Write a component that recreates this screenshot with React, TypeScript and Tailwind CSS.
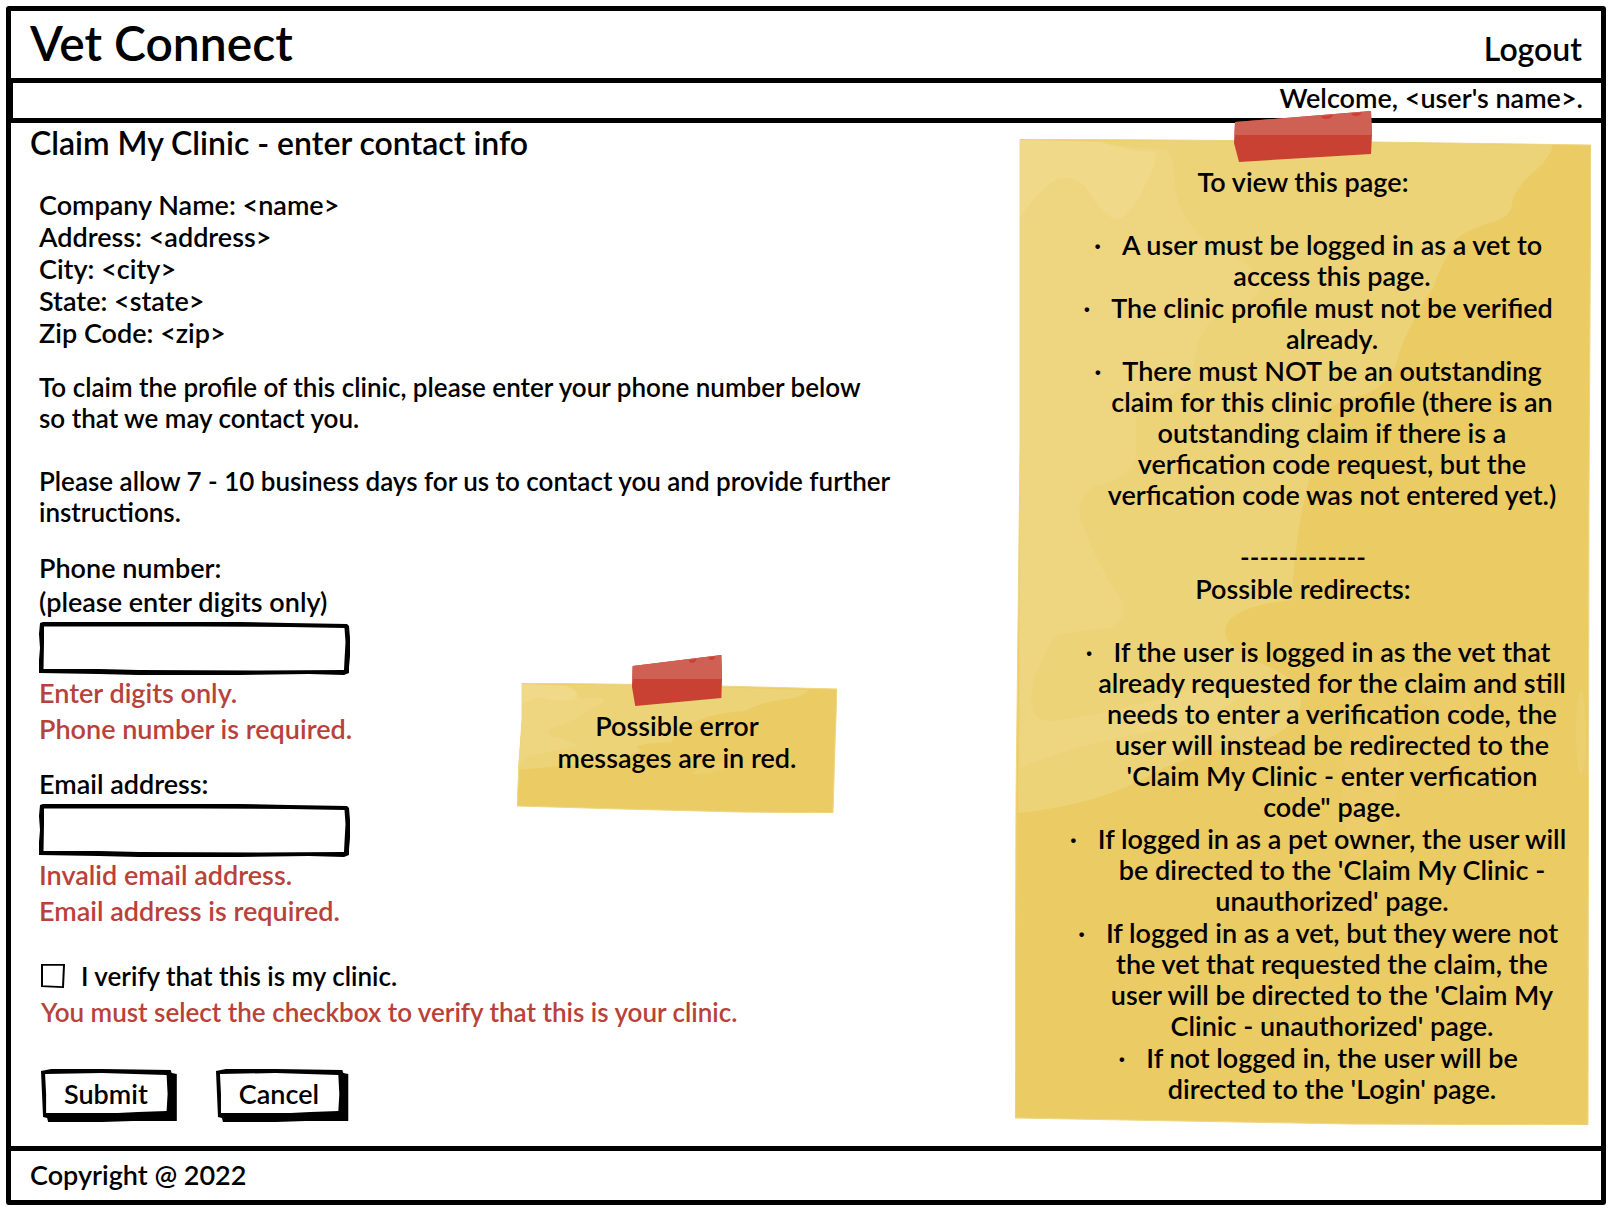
import type { ReactNode } from "react";

const companyDetails = [
  "Company Name: <name>",
  "Address: <address>",
  "City: <city>",
  "State: <state>",
  "Zip Code: <zip>",
];

const viewRules = [
  ["A user must be logged in as a vet to", "access this page."],
  ["The clinic profile must not be verified", "already."],
  [
    "There must NOT be an outstanding",
    "claim for this clinic profile (there is an",
    "outstanding claim if there is a",
    "verfication code request, but the",
    "verfication code was not entered yet.)",
  ],
];

const redirectRules = [
  [
    "If the user is logged in as the vet that",
    "already requested for the claim and still",
    "needs to enter a verification code, the",
    "user will instead be redirected to the",
    "'Claim My Clinic - enter verfication",
    'code" page.',
  ],
  [
    "If logged in as a pet owner, the user will",
    "be directed to the 'Claim My Clinic -",
    "unauthorized' page.",
  ],
  [
    "If logged in as a vet, but they were not",
    "the vet that requested the claim, the",
    "user will be directed to the 'Claim My",
    "Clinic - unauthorized' page.",
  ],
  ["If not logged in, the user will be", "directed to the 'Login' page."],
];

function Tape({ className }: { className: string }) {
  return (
    <svg
      className={`absolute inset-x-0 -top-7 mx-auto h-[51px] ${className}`}
      viewBox="0 0 138 51"
      preserveAspectRatio="none"
      aria-hidden="true"
    >
      <path d="M1 11 L137 0 L138 24 L137 43 L5 51 L0 32 Z" fill="#c94133" />
      <path d="M1 11 L137 0 L138 24 H0.5 Z" fill="#cf6054" />
      <path d="M87 5 L99 4 Q97 8 92 8 Q88 8 87 5 Z" fill="#c94133" />
      <path d="M117 2.500 L128 1.500 Q126 5 122 5 Q118 5 117 2.500 Z" fill="#c94133" />
    </svg>
  );
}

function TallPaper() {
  return (
    <svg
      className="absolute inset-0 size-full"
      viewBox="1015 139 576 986"
      preserveAspectRatio="none"
      aria-hidden="true"
    >
      <path
        d="M1020 139 L1300 141 L1591 145 L1589 500 L1588 1125 L1350 1124 L1180 1121 L1015 1118 L1016 800 L1020 450 Z"
        fill="#ebcb63"
        stroke="#efd684"
        strokeWidth="1"
      />
      <path
        d="M1020 140 L1300 142 L1553 145 Q1550 158 1538 168 Q1512 190 1512 205 Q1510 218 1490 223 Q1460 232 1455 242 Q1436 275 1434 287 Q1412 318 1399 353 Q1394 385 1360 396 Q1330 402 1320 420 Q1308 450 1309 480 Q1294 540 1292 600 Q1225 607 1225 632 Q1227 650 1265 665 Q1301 680 1301 700 Q1300 730 1254 743 Q1200 750 1156 772 Q1100 805 1018 813 L1020 450 Z"
        fill="#ecd377"
      />
      <path
        d="M1020 140 L1100 142 Q1130 149 1166 149 Q1174 155 1175 187 Q1180 220 1210 244 Q1256 262 1259 285 Q1262 300 1225 313 Q1196 325 1194 367 Q1190 395 1150 400 L1136 410 L1136 455 Q1132 480 1095 486 Q1076 498 1080 518 Q1100 570 1122 600 Q1128 622 1108 628 L1060 634 Q1048 640 1033 683 Q1026 722 1050 721 Q1120 712 1180 692 Q1215 680 1255 683 Q1215 725 1150 732 Q1075 745 1020 768 L1020 450 Z"
        fill="#eed580"
      />
      <path
        d="M1020 140 L1100 142 Q1130 152 1155 152 Q1156 170 1145 185 Q1130 219 1115 219 Q1102 215 1085 186 Q1062 168 1045 188 Q1030 202 1020 217 Z"
        fill="#f0da8a"
      />
      <path
        d="M1381 682 Q1430 668 1462 690 Q1482 712 1458 728 Q1445 730 1434 715 Q1412 690 1381 682 Z"
        fill="#eccd69"
      />
      <path d="M1350 726 Q1376 718 1395 740 Q1408 790 1380 835 Q1362 866 1350 858 Q1334 790 1350 726 Z" fill="#eccd69" />
      <ellipse cx="1581" cy="733" rx="5" ry="42" fill="#eccf6e" />
    </svg>
  );
}

function SmallPaper() {
  return (
    <svg
      className="absolute inset-0 size-full"
      viewBox="517 683 320 130"
      preserveAspectRatio="none"
      aria-hidden="true"
    >
      <path
        d="M522 683 L680 685 L837 689 L835 745 L833 813 L740 812 L620 809 L517 806 L519 765 L522 720 Z"
        fill="#ebcb63"
        stroke="#efd684"
        strokeWidth="1"
      />
      <path
        d="M522 684 L680 686 L808 690 Q806 697 780 700 Q762 702 745 711 Q715 713 700 720 Q672 728 672 742 Q625 744 641 750 Q620 762 560 766 L518 770 L522 720 Z"
        fill="#ecd377"
      />
      <path
        d="M522 684 L566 686 Q580 692 578 698 L603 698 Q606 704 594 707 Q575 722 553 728 Q540 735 560 738 L580 746 Q545 752 530 756 L519 764 L522 720 Z"
        fill="#eed580"
      />
      <path d="M522 684 L566 686 Q582 692 574 700 Q552 702 540 697 L522 704 Z" fill="#f0da8a" />
      <path d="M692 774 Q700 764 740 760 Q715 776 692 774 Z" fill="#eccf6e" />
    </svg>
  );
}

function RuleList({ rules }: { rules: string[][] }) {
  return (
    <ul className="space-y-px pl-[58px]">
      {rules.map((lines) => (
        <li key={lines[0]}>
          {lines.map((line, i) => (
            <span key={line} className="block whitespace-nowrap">
              {i === 0 && (
                <span aria-hidden="true" className="-ml-7 inline-block w-7 text-left">
                  ·
                </span>
              )}
              {line}
            </span>
          ))}
        </li>
      ))}
    </ul>
  );
}

function TextField({ id, label, type }: { id: string; label: ReactNode; type: string }) {
  return (
    <>
      <label htmlFor={id} className="block leading-[34px]">
        {label}
      </label>
      <div className="relative mt-[3px] h-[53px] w-[312px]">
        <svg
          className="absolute inset-0 size-full"
          viewBox="0 0 312 53"
          preserveAspectRatio="none"
          aria-hidden="true"
        >
          <path
            fillRule="evenodd"
            d="M1 1 L4 0 L200 0 L250 1 L308 2 L310 4 L311 16 L311 34 L310 45 L310 51 L305 53 L270 52 L200 53 L100 53 L60 52 L0 51 L0 38 L1 26 L0 12 Z M5 4.500 L5 20 L4.500 47 L60 47 L100 48 L220 48.500 L305 48 L305.500 38 L306.500 20 L305.500 6 L250 5 L160 4.500 L80 4.500 Z"
            fill="#000"
          />
        </svg>
        <input
          id={id}
          name={id}
          type={type}
          className="relative size-full bg-transparent px-3 outline-none"
        />
      </div>
    </>
  );
}

function SketchButton({ type, children }: { type: "submit" | "button"; children: ReactNode }) {
  return (
    <button type={type} className="relative h-[53px] pr-[30px] pb-1 pl-[23px]">
      <svg
        className="absolute inset-0 size-full"
        viewBox="0 0 134 53"
        preserveAspectRatio="none"
        aria-hidden="true"
      >
        <path
          d="M0 2 L10 0 L60 0 L127 1 L128 4 L133 5 L133 52 L90 52 L60 53 L7 53 L6 49 L2 48 L1 25 Z"
          fill="#000"
        />
        <path d="M4 5 L60 4 L123 6 L124 25 L123 42 L95 43 L75 44 L5 44 L5 25 Z" fill="#fff" />
      </svg>
      <span className="relative">{children}</span>
    </button>
  );
}

export default function App() {
  return (
    <div className="flex min-h-screen flex-col bg-white p-1.5 pb-[7px] font-['Lato','Liberation_Sans',sans-serif] text-[27px] leading-[31px] font-semibold text-black">
      <div className="flex grow flex-col rounded-[3px] border-5 border-black">
        <header>
          <div className="flex items-baseline justify-between px-[19px] pt-[5px] pb-2">
            <h1 className="text-[48px] leading-[54px]">Vet Connect</h1>
            <a href="#logout" className="text-[32px] leading-[38px]">
              Logout
            </a>
          </div>
          <div className="border-y-5 border-l-2 border-black pr-4.5 pb-[5px] text-right leading-[30px]">
            Welcome, &lt;user's name&gt;.
          </div>
        </header>

        <main className="grid grow grid-cols-[minmax(0,1fr)_576px] items-start pr-2.5 pb-[21px]">
          <div className="pl-[19px]">
            <h2 className="text-[32px] leading-10">Claim My Clinic - enter contact info</h2>

            <div className="pl-[9px]">
              <ul className="mt-[26px] space-y-px">
                {companyDetails.map((line) => (
                  <li key={line}>{line}</li>
                ))}
              </ul>
              <div className="mt-6 space-y-8 text-[26px]">
                <p>
                  To claim the profile of this clinic, please enter your phone number below
                  <br />
                  so that we may contact you.
                </p>
                <p>
                  Please allow 7 - 10 business days for us to contact you and provide further
                  <br />
                  instructions.
                </p>
              </div>

              <form className="mt-[23px]" onSubmit={(e) => e.preventDefault()}>
                <div className="flex items-start">
                  <div className="grow">
                    <TextField
                      id="phone"
                      type="tel"
                      label={
                        <>
                          Phone number:
                          <br />
                          (please enter digits only)
                        </>
                      }
                    />
                    <div className="leading-9 text-[#b8423a]">
                      <p>Enter digits only.</p>
                      <p>Phone number is required.</p>
                    </div>
                    <div className="mt-5">
                      <TextField id="email" type="email" label="Email address:" />
                      <div className="leading-9 text-[#b8423a]">
                        <p>Invalid email address.</p>
                        <p>Email address is required.</p>
                      </div>
                    </div>
                  </div>

                  <aside className="relative mt-[132px] mr-[178px] h-[130px] w-80 pt-[27px] text-center leading-8">
                    <SmallPaper />
                    <Tape className="w-[90px]" />
                    <p className="relative">
                      Possible error
                      <br />
                      messages are in red.
                    </p>
                  </aside>
                </div>

                <div className="mt-[29px] text-[26px] leading-9">
                  <label className="flex items-center gap-4">
                    <span className="relative ml-0.5 size-6">
                      <input
                        type="checkbox"
                        name="verify"
                        className="block size-full appearance-none"
                      />
                      <svg
                        className="pointer-events-none absolute inset-0 size-full"
                        viewBox="0 0 24 26"
                        preserveAspectRatio="none"
                        aria-hidden="true"
                      >
                        <path d="M1 1 L23 1 L22 25 L1 24 Z" fill="none" stroke="#000" strokeWidth="2" />
                      </svg>
                    </span>
                    I verify that this is my clinic.
                  </label>
                  <p className="pl-0.5 text-[#b8423a]">
                    You must select the checkbox to verify that this is your clinic.
                  </p>
                </div>

                <div className="mt-[39px] ml-0.5 flex gap-[38px]">
                  <SketchButton type="submit">Submit</SketchButton>
                  <SketchButton type="button">Cancel</SketchButton>
                </div>
              </form>
            </div>
          </div>

          <aside className="relative mt-4 pt-[27px] pb-[21px] text-center">
            <TallPaper />
            <Tape className="w-[138px]" />
            <div className="relative">
              <h3 className="mb-8">To view this page:</h3>
              <RuleList rules={viewRules} />
              <p className="mt-8 text-[26px]">-------------</p>
              <h3 className="mb-8">Possible redirects:</h3>
              <RuleList rules={redirectRules} />
            </div>
          </aside>
        </main>

        <footer className="border-t-5 border-black px-[19px] pt-2 pb-2.5">Copyright @ 2022</footer>
      </div>
    </div>
  );
}
